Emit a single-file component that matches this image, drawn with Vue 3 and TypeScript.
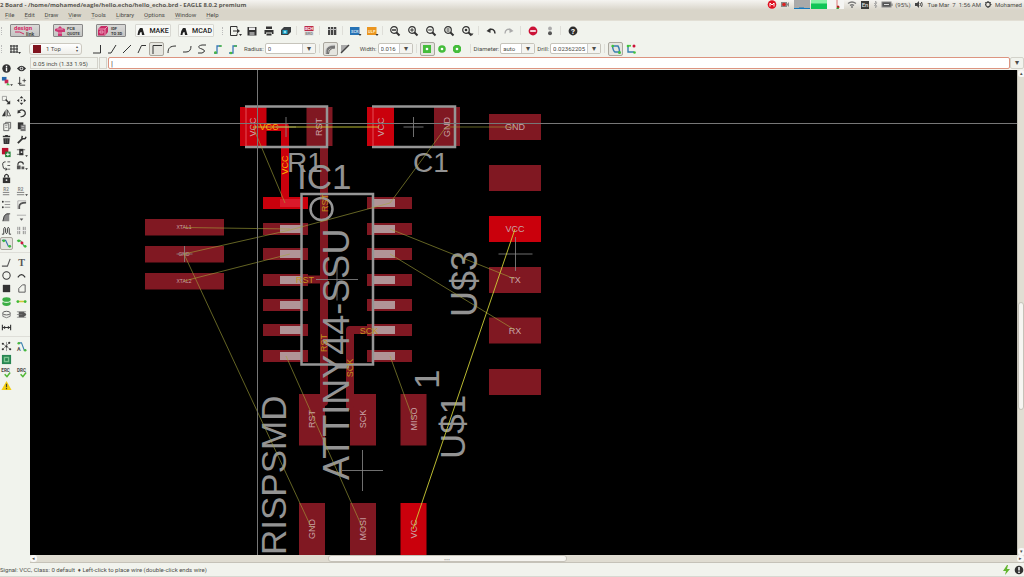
<script setup lang="ts">
import { ref } from 'vue'

interface Tool { id: string; label: string; wide?: boolean; on?: boolean }
interface Pad { x: number; y: number; w: number; h: number; hot?: boolean }
interface Label { t: string; x: number; y: number; up?: boolean; kind: string }

const D = '#333'
const line = (d: string, c = D, w = 1) => `<path d="${d}" fill="none" stroke="${c}" stroke-width="${w}"/>`
const fill = (d: string, c = D) => `<path d="${d}" fill="${c}"/>`
const disc = (x: number, y: number, r: number, c = D) => `<circle cx="${x}" cy="${y}" r="${r}" fill="${c}"/>`
const ring = (x: number, y: number, r: number, c = D, w = 1) => `<circle cx="${x}" cy="${y}" r="${r}" fill="none" stroke="${c}" stroke-width="${w}"/>`
const word = (t: string, x: number, y: number, s: number, c = '#fff') => `<text x="${x}" y="${y}" font-size="${s}" font-weight="700" text-anchor="middle" fill="${c}">${t}</text>`
const lens = ring(5, 5, 3.3, D, 1.2) + line('M7.5 7.5L10.5 10.5', D, 2)

const icons: Record<string, string> = {
  export: line('M8 3.500V1.500H1.500V10.500H8V8.500') + line('M4 6H9') + fill('M8 3.500L11 6L8 8.500Z') + fill('M10 9H13L11.500 11Z'),
  save: fill('M1.500 2H10.500V10.500H1.500Z') + fill('M3 2.500H9V5H3Z', '#eee') + fill('M3.500 7H8.500V10.500H3.500Z', '#999'),
  print: fill('M3 1.500H9V4H3ZM1.500 5H10.500V9H9V7.500H3V9H1.500ZM3.500 8.500H8.500V10.500H3.500Z'),
  boards: fill('M4 2H11V7L8 10H1V5Z', '#3a3f42') + fill('M2.500 5H7.500V9H2.500Z', '#1a9fc4') + disc(5, 7, 1.3, '#9de'),
  schematic: fill('M1.500 1H10.500V6H1.500Z', '#bd2946') + fill('M1.500 6H10.500V10.500H1.500Z', '#ddd') + word('SCH', 6, 5.2, 4) + word('BRD', 6, 10, 4, '#888'),
  library: fill('M2 2H4.300V10H2ZM5 2H7.300V10H5ZM8 2H10.300V10H8Z', '#444') + line('M2 4.500H11', '#bbb'),
  scr: fill('M1 2H10.500V10H1Z', '#2773b5') + word('SCR', 5.8, 7.6, 4, '#cde') + fill('M9.500 9H12.500L11 11Z'),
  ulp: fill('M1 2H10.500V10H1Z', '#ea951f') + word('ULP', 5.8, 7.6, 4, '#fec') + fill('M9.500 9H12.500L11 11Z'),
  zoomfit: lens + line('M3 5H7', D, 1.5),
  zoomin: lens + line('M3.200 5H6.800M5 3.200V6.800'),
  zoomout: lens + line('M3.200 5H6.800'),
  zoomredraw: lens + line('M3.500 4H6.500M3.500 6H6.500'),
  zoomselect: lens + disc(5, 5, 1.3) + fill('M9.500 8.500H12.500L11 10.500Z'),
  undo: line('M3.500 5.500C7 3 10 4.500 10 8.500', D, 1.5) + fill('M1.500 6L5.500 3V8Z'),
  redo: line('M8.500 5.500C5 3 2 4.500 2 8.500', '#aaa', 1.3) + fill('M10.500 6L6.500 3V8Z', '#aaa'),
  stop: disc(6, 6, 4.4, '#cb1237') + line('M3.200 6H8.800', '#fff', 1.6),
  go: disc(6, 3.5, 1.9, '#aaa') + disc(6, 8.2, 2, '#555'),
  help: disc(6, 6, 4.4, '#2d2d2d') + word('?', 6, 8.8, 8),
  grid: line('M2 3H10M2 6H10M2 9H10M3 2V10M6 2V10M9 2V10', D, 1) + fill('M10 9H13L11.500 11Z'),
  bend0: line('M2 10H9.500V2'), bend1: line('M2 10H5L10 2'), bend2: line('M2 10L10 2'), bend3: line('M2 10L5.500 2.500H10'),
  bend4: line('M2 11V2.500H11'), bend5: line('M2 10C2 5 4 3 10 3'), bend6: line('M2 9H5Q10 9 10 3'), bend7: line('M10 2H6C1 3 2 5 6 6Q11 8 6 10H2'),
  bend8: line('M3 10H6V3H10', '#3a78b8', 1.3) + disc(4.5, 9.7, 1.4, '#49b93f') + line('M8 3H11', '#49b93f', 1.3),
  bend9: line('M3 10H7V3H11', '#3a78b8', 1.3) + disc(5, 10, 1.3, '#49b93f') + line('M8 3H11', '#49b93f', 1.3),
  miter0: line('M3 11V8Q4 3.500 11 3.500', '#777', 2.5) + line('M2 10.500V6Q4 2 11 2', '#ccc', .8) + line('M4.500 11Q5 5 11 5', '#444', .8),
  miter1: fill('M2 2H10L2 10Z', '#aaa') + line('M2 10L10 2', '#444', 1.5),
  sq: fill('M2 2H10V10H2Z', '#45bd3c') + disc(6, 6, 1.3, '#fff'),
  rd: disc(6, 6, 3.8, '#45bd3c') + disc(6, 6, 1.3, '#fff'),
  oct: fill('M4 2H8L10 4V8L8 10H4L2 8V4Z', '#45bd3c') + disc(6, 6, 1.3, '#fff'),
  loop1: line('M2.500 3H8Q9.500 5 9.500 9H5Q3 8 2.500 3', '#397fb0', 1.5) + disc(2.7, 3, 1.3, '#3fc33b') + disc(9.5, 9.5, 1.5, '#3fc33b'),
  loop2: line('M3 3V9H9', '#397fb0', 1.4) + disc(3, 3, 1.3, '#3fc33b') + disc(9.5, 9.5, 1.3, '#3fc33b') + disc(9, 3, 1.5, '#cb1237') + disc(5, 2.7, 1, '#3fc33b'),
  info: disc(6, 6, 4.6) + line('M6 5V9M6 3V4.300', '#fff', 1.5),
  eye: fill('M1 6Q6 0 11 6Q6 12 1 6Z') + disc(6, 6, 2, '#eee') + disc(6, 6, 1.1),
  layers: fill('M1 1H6V5H1Z', '#2468ae') + fill('M4 4H8V8H4Z', '#c62453') + fill('M7 7L10 10H6Z', '#49bd56') + fill('M10 9H13L11.500 11Z'),
  mark: line('M4 1V10H10M2 8H6') + line('M7 5H11M9 3V7', D, .8),
  show: line('M1.500 1.500H6V6H1.500Z', '#888', .8) + line('M5 5L9 9', D, 1.5) + fill('M10 6V10H6Z'),
  move: fill('M6 1L8 3.500H4ZM6 11L8 8.500H4ZM1 6L3.500 4V8ZM11 6L8.500 4V8Z') + disc(6, 6, .7),
  mirror: fill('M5 2V9H1Z') + line('M6 1V10', '#777', .6) + line('M7 2V8.500H10.500Z', D, .8),
  rotate: line('M3 4C6 0 11 3 10 7Q8 10 5 9.500', D, 1.3) + fill('M1.500 6L5.500 5L2 2Z'),
  group: line('M3 3H8.500V10.500H3ZM5 3V1.500H10.500V8H9', '#555', .9) + line('M4.500 5H7M4.500 7H7', '#777', .7),
  paste: fill('M2 1.500H8V9H2Z') + fill('M5 4H10.500V11H5Z', '#777') + line('M6 6H9M6 8H9', '#ddd', .7),
  trash: fill('M2 2H10V3.500H2ZM4.500 1H7.500V2H4.500ZM2.500 4.500H9.500L9 11H3Z') + line('M5 5V10M7 5V10', '#777', .6),
  wrench: line('M2 10L7 5', D, 2) + line('M7 2Q5 6 10 5L11 3', D, 1.6),
  add: fill('M1 1H8V8H1Z', '#b9102e') + fill('M4.500 5H10.500V11H4.500Z', '#238239') + line('M5.500 8H9.500M7.500 6V10', '#fff', 1),
  pinswap: line('M1 3H10M1 8H8', '#666', 1) + fill('M3.500 2H8V9H3.500Z') + disc(6, 5.5, 1, '#eee') + fill('M10 9H13L11.500 11Z'),
  replace: line('M5 2Q1 2 2 6Q2 10 5 10', D, 1) + line('M7 2H10M7 6H10M7 10H10', '#555', 1) + fill('M5 8L7 10L5 12Z'),
  gateswap: line('M2 6Q2 2 5 2Q8 2 8 5', D, 1.2) + fill('M1 6H5V10H1ZM6 7H9V10H6Z', '#555') + fill('M10 9H13L11.500 11Z'),
  lock: fill('M2 5H10V11H2Z') + line('M4 5V3Q6 0 8 3V5', D, 1.4) + disc(6, 7.7, 1, '#eee'),
  name: word('R2', 5.5, 5, 5, '#888') + line('M2 7H9M2 9.500H9', '#777', 1),
  smash: word('R2', 5, 5, 5, '#888') + line('M1 7H9M1 9.500H9', '#777', 1) + fill('M10 9H13L11.500 11Z'),
  miter: disc(2, 3, 1) + disc(2, 9, 1) + line('M4 3H10M4 6H10M4 9H10', '#999', 1.3),
  corner: line('M3.500 11V8Q4 4 11 4', '#555', 2) + line('M2 11V2H11', '#aaa', 1),
  split: fill('M2 10Q3 3 6 2H9V10Z', '#888') + line('M2 10Q3 3 6 2H10', '#333', 1),
  optimize: line('M1 3.500H11', '#999', .8) + fill('M4 7H8L6 9.500Z', '#555'),
  meander: line('M1 10H3V4Q4 1 5 4V8Q6 11 7 8V4Q8 1 9 4V10H11', '#333', 1),
  ripup: line('M2 2V10M4 2V10M8 2V10M10 2V10', '#888', 1) + line('M1 6H11', '#eee', 1),
  route: line('M1 2.500H5L8 9H11', '#3975ad', 1.3) + disc(3, 3, 1.5, '#3cba3a') + disc(9.5, 9, 1.5, '#3cba3a'),
  unroute: line('M1 3H5L9 9', '#47a45c', 1.3) + disc(3, 3, 1.5, '#3cba3a') + disc(6.5, 5.5, 1.6, '#d01640') + disc(10, 9, 1.5, '#3cba3a'),
  wire: line('M1 10H7L10 2', '#555', 1.2), text: `<text x="6" y="10" font-size="11" font-family="Liberation Serif" font-weight="700" text-anchor="middle" fill="#555">T</text>`,
  circle: ring(6, 6, 4, D, 1.1), arc: line('M2 8Q6 2 10 8', D, 1.3), rect: fill('M2 2H10V10H2Z'),
  polygon: line('M3 10V6L7 2H10V10Z', '#555', 1),
  via: '<ellipse cx="6" cy="8" rx="4.500" ry="3" fill="#3cae45"/><ellipse cx="6" cy="5" rx="4.500" ry="2.500" fill="#d7f2d6"/><ellipse cx="6" cy="3.800" rx="4.500" ry="2.500" fill="#3cae45"/>',
  signal: line('M1 6H11', '#d0c835', 1.7) + disc(2, 6, 1.5, '#3cba3a') + disc(10, 6, 1.5, '#3cba3a'),
  hole: `<ellipse cx="6" cy="4.500" rx="4.200" ry="2" fill="none" stroke="#555"/><path d="M2 5V8Q6 11 10 8V5" fill="none" stroke="#777"/>`,
  attribute: fill('M3 3H9V9H3Z', '#555') + line('M1 3H11M1 6H11M1 9H11', '#777', .8) + disc(9, 6, 2, '#555'),
  dimension: line('M1.500 3V9M10.500 3V9M2 6H10', D, 1.2) + fill('M2 6L4.500 4V8ZM10 6L7.500 4V8Z'),
  ratsnest: line('M2 3L10 9M2 9L9 2M6 1V11', '#777', .8) + disc(2, 3, 1.2) + disc(10, 9, 1.2) + disc(2, 9, 1.2) + disc(9, 2, 1.2) + disc(6, 6, 1.2),
  auto: line('M3 2H6L9 10H11', '#397fb0', 1.2) + disc(3, 2.5, 1.4, '#49b93f') + disc(10, 10, 1.4, '#49b93f') + word('A', 3, 10.5, 6, '#555'),
  pcb: fill('M1 1H11V11H1Z', '#278652') + fill('M3 3H9V9H3Z', '#7bc48f') + fill('M4.500 4.500H7.500V7.500H4.500Z', '#278652'),
  erc: word('ERC', 5, 5, 5, '#444') + line('M4 8L6.500 10.500L10 6', '#50b735', 1.6),
  drc: word('DRC', 6, 5, 5, '#444') + line('M5 8L7.500 10.500L11 6', '#50b735', 1.6),
  warn: fill('M6 1L11.500 11H.5Z', '#f5cf10') + line('M6 4V7.500M6 8.500V10', '#443', 1.3),
}

const files: Tool[][] = [
  [{ id: 'export', label: 'Export' }, { id: 'save', label: 'Save' }, { id: 'print', label: 'Print' }, { id: 'boards', label: 'CAM' }],
  [{ id: 'schematic', label: 'Schematic' }],
  [{ id: 'library', label: 'Libraries' }],
  [{ id: 'scr', label: 'Script' }, { id: 'ulp', label: 'Run ULP' }],
  [{ id: 'zoomfit', label: 'Fit', wide: true }, { id: 'zoomin', label: 'Zoom in', wide: true }, { id: 'zoomout', label: 'Zoom out', wide: true }, { id: 'zoomredraw', label: 'Redraw', wide: true }, { id: 'zoomselect', label: 'Zoom select', wide: true }],
  [{ id: 'undo', label: 'Undo', wide: true }, { id: 'redo', label: 'Redo', wide: true }],
  [{ id: 'stop', label: 'Cancel' }, { id: 'go', label: 'Go' }],
  [{ id: 'help', label: 'Help', wide: true }],
]
const bends = Array.from({ length: 10 }, (_, i) => ({ id: 'bend' + i, label: 'Wire bend ' + i, on: i === 4 }))
const shapes = ['sq', 'rd', 'oct']
const palette: string[][][] = [
  [['info', 'eye'], ['layers', 'mark']],
  [['show', 'move'], ['mirror', 'rotate'], ['group', 'paste'], ['trash', 'wrench'], ['add', 'pinswap'], ['replace', 'gateswap'], ['lock'], ['name', 'smash'], ['miter', 'corner'], ['split', 'optimize'], ['meander', 'ripup'], ['route', 'unroute']],
  [['wire', 'text'], ['circle', 'arc'], ['rect', 'polygon'], ['via', 'signal'], ['hole', 'attribute'], ['dimension']],
  [['ratsnest', 'auto'], ['pcb'], ['erc', 'drc'], ['warn']],
]
const menus = ['File', 'Edit', 'Draw', 'View', 'Tools', 'Library', 'Options', 'Window', 'Help']
const command = ref('')

const rows = [197, 223, 248, 274, 299, 324, 350]
const pads: Pad[] = [
  ...[219, 246, 273].map(y => ({ x: 145, y, w: 79, h: 16.5 })),
  ...[114, 165, 216, 267, 317.500, 369].map((y, i) => ({ x: 489, y, w: 52, h: 26, hot: i === 2 })),
  { x: 240, y: 107, w: 26.5, h: 39, hot: true }, { x: 306.5, y: 107, w: 26, h: 39 },
  { x: 367, y: 107, w: 27, h: 39, hot: true }, { x: 434, y: 107, w: 26, h: 39 },
  ...rows.map((y, i) => ({ x: 263, y, w: 45, h: 12, hot: i === 0 })),
  ...rows.map(y => ({ x: 367, y, w: 45, h: 12 })),
  ...[299, 350, 400.5].map(x => ({ x, y: 394, w: 26, h: 51.5 })),
  ...[299, 350, 400.5].map((x, i) => ({ x, y: 503, w: 26, h: 53, hot: i === 2 })),
]
const labels: Label[] = [
  { t: 'R1', x: 287, y: 172, kind: 'mid' }, { t: 'C1', x: 413, y: 172, kind: 'mid' }, { t: 'IC1', x: 297, y: 189, kind: 'big' },
  { t: 'ATTINY44-SSU', x: 349, y: 480, up: true, kind: 'huge' }, { t: 'RISPSMD', x: 286, y: 555, up: true, kind: 'big' },
  { t: 'U$3', x: 477, y: 317, up: true, kind: 'huge' }, { t: 'U$1', x: 465, y: 459, up: true, kind: 'big' }, { t: '1', x: 439, y: 389, up: true, kind: 'big' },
  { t: 'VCC', x: 256, y: 127, up: true, kind: 'pin' }, { t: 'RST', x: 322, y: 127, up: true, kind: 'pin' },
  { t: 'VCC', x: 384, y: 127, up: true, kind: 'pin' }, { t: 'GND', x: 450, y: 127, up: true, kind: 'pin' },
  { t: 'GND', x: 515, y: 130, kind: 'pin' }, { t: 'VCC', x: 515, y: 232, kind: 'pin' }, { t: 'TX', x: 515, y: 283, kind: 'pin' }, { t: 'RX', x: 515, y: 334, kind: 'pin' },
  { t: 'XTAL1', x: 184, y: 229, kind: 'tiny' }, { t: 'GND', x: 184, y: 256, kind: 'tiny' }, { t: 'XTAL2', x: 184, y: 283, kind: 'tiny' },
  { t: 'RST', x: 315, y: 419, up: true, kind: 'pin' }, { t: 'SCK', x: 366, y: 419, up: true, kind: 'pin' }, { t: 'MISO', x: 417, y: 419, up: true, kind: 'pin' },
  { t: 'GND', x: 315, y: 529, up: true, kind: 'pin' }, { t: 'MOSI', x: 366, y: 529, up: true, kind: 'pin' }, { t: 'VCC', x: 417, y: 529, up: true, kind: 'pin' },
  { t: 'VCC', x: 269, y: 130, kind: 'netHot' }, { t: 'VCC', x: 288, y: 165, up: true, kind: 'netHot' },
  { t: 'RST', x: 305, y: 283, kind: 'net' }, { t: 'SCK', x: 369, y: 334, kind: 'net' },
  { t: 'RST', x: 328, y: 203, up: true, kind: 'net' }, { t: 'RST', x: 327, y: 343, up: true, kind: 'net' }, { t: 'SCK', x: 353, y: 368, up: true, kind: 'net' },
]
const airwires = [
  'M253 127L285 203', 'M184 227.500L290 229', 'M184 254L290 230L390 203', 'M184 281L290 254', 'M184 254L312 529', 'M286 356L363 529',
  'M390 356L413 419', 'M390 229L515 279', 'M390 254L515 330', 'M446 127L390 203', 'M446 127H515',
]
const crosses = [[286, 127, 10], [413.5, 127, 10], [515.5, 254, 17], [184.5, 254, 8], [337, 279.5, 21], [362.5, 470.5, 20.5]]
</script>

<template>
  <div class="app">
    <header class="title">
      <h1>2 Board - /home/mohamed/eagle/hello.echo/hello_echo.brd - EAGLE 8.0.2 premium</h1>
      <div class="tray">
        <svg class="sys" width="78" height="10" viewBox="0 0 78 10">
          <circle cx="5" cy="4.500" r="4.300" fill="#df1020" /><path d="M3 6.500V3L5 5L7 3V6.500" fill="none" stroke="#fff" />
          <path d="M14 2H20V7H14ZM20 4L22 2V7L20 5Z" fill="#888" /><circle cx="17" cy="4.500" r="1.800" fill="#d22" />
          <rect x="27" width="16" height="9" fill="#aaa" /><path d="M27 9V8H32V7.500H37V8H43V9Z" fill="#1479bd" />
          <rect x="44" width="16" height="9" fill="#10c557" /><rect x="44" width="16" height="3.500" fill="#88f2a8" />
          <rect x="60" width="17" height="9" fill="#f5f5f3" /><path d="M70 0V6" stroke="#d77" /><circle cx="71" cy="7" r="1.500" fill="#b22" /><path d="M69 9L71 7L72 9Z" fill="#3a3" />
        </svg>
        <svg class="sys" width="44" height="10" viewBox="0 0 44 10">
          <path d="M0 3.500Q4 .5 8 3.500M2 5.500Q4 4 6 5.500" fill="none" stroke="#777" stroke-width="1.300" /><circle cx="4" cy="7" r="1" fill="#777" />
          <rect x="13" y="1" width="8" height="8" fill="#3b3b39" /><text x="17" y="7" text-anchor="middle" fill="#eee">En</text>
          <path d="M26 3L29 6L27.500 8V1L29 3L26 6" fill="none" stroke="#999" stroke-width=".7" />
          <rect x="34" y="2" width="9" height="5" fill="#555" stroke="#888" /><path d="M36 4.500H41" stroke="#ddd" /><path d="M44 3.500V6" stroke="#777" />
        </svg>
        <span>(95%)</span>
        <svg class="sys" width="11" height="10" viewBox="0 0 11 10"><path d="M1 3H3L5 1V8L3 6H1Z" fill="#444" /><path d="M6 3Q7 4.500 6 6M7.500 2Q9 4.500 7.500 7" fill="none" stroke="#444" /></svg>
        <span>Tue Mar&nbsp; 7&nbsp; 1:56 AM</span>
        <svg class="sys" width="8" height="10" viewBox="0 0 8 10"><circle cx="4" cy="4.500" r="2.300" fill="none" stroke="#444" stroke-width="1.200" /><path d="M4 1V3M1 4.500H2M6 4.500H7.500M4 7V8M1.500 2L2 3M6.500 2L6 3" stroke="#444" /></svg>
        <span>Mohamed</span>
      </div>
    </header>
    <nav class="menu"><button v-for="m in menus" :key="m"><u>{{ m[0] }}</u>{{ m.slice(1) }}</button></nav>

    <div class="bar first">
      <i class="handle" />
      <button class="brand" aria-label="Design link">
        <svg width="28" height="12" viewBox="0 0 28 12"><text x="3" y="5" font-size="6" fill="#d32b65" font-weight="700">design</text><text x="15" y="11" font-size="5" fill="#444" font-weight="700">link</text><path d="M4 7Q9 6 13 9" fill="none" stroke="#d32b65" /></svg>
      </button>
      <button class="brand" aria-label="PCB quote">
        <svg width="28" height="12" viewBox="0 0 28 12"><path d="M1 4L4 3L6 1L8 3L11 4V7L8 7V11H4V7L1 6Z" fill="#cb3a75" /><path d="M3 4H9M4 8H8" stroke="#e699b8" /><text x="13" y="5" font-size="4" fill="#444" font-weight="700">PCB</text><text x="13" y="10" font-size="4" fill="#444" font-weight="700">QUOTE</text></svg>
      </button>
      <button class="brand" aria-label="IDF to 3D">
        <svg width="28" height="12" viewBox="0 0 28 12"><path d="M1 4L4 1H11V7L8 10.500H1Z" fill="#c62b64" /><path d="M1 4H8V10M8 4L11 1M3 6H6V8H3Z" fill="none" stroke="#f3b4cb" stroke-width=".8" /><text x="14" y="5" font-size="4" fill="#333" font-weight="700">IDF</text><text x="14" y="10" font-size="4" fill="#333" font-weight="700">TO 3D</text></svg>
      </button>
      <button v-for="n in ['MAKE', 'MCAD']" :key="n" class="flat">
        <svg width="8" height="8" viewBox="0 0 8 8"><path d="M.5 8Q.5 4 3 1H5.500L7.500 8H5L4.500 5Q2.500 5 2.500 8Z" fill="#222" /></svg>{{ n }}
      </button>
      <i class="handle" />
      <div v-for="(g, i) in files" :key="i" class="group">
        <button v-for="t in g" :key="t.id" class="tool" :class="{ wide: t.wide }" :aria-label="t.label"><svg class="icon" viewBox="0 0 12 12" v-html="icons[t.id]" /></button>
      </div>
    </div>

    <div class="bar second">
      <i class="handle" />
      <button class="tool" aria-label="Grid"><svg class="icon" viewBox="0 0 12 12" v-html="icons.grid" /></button>
      <label class="layer"><span class="swatch" /><select aria-label="Layer"><option>1 Top</option></select><span class="spin">▴<br>▾</span></label>
      <div class="set bends"><button v-for="b in bends" :key="b.id" class="tool" :class="{ on: b.on }" :aria-label="b.label"><svg class="icon" viewBox="0 0 12 12" v-html="icons[b.id]" /></button></div>
      <label class="field">Radius:<span class="combo long"><select><option>0</option></select></span></label>
      <div class="set ruled"><button class="tool on" aria-label="Round miter"><svg class="icon" viewBox="0 0 12 12" v-html="icons.miter0" /></button><button class="tool" aria-label="Straight miter"><svg class="icon" viewBox="0 0 12 12" v-html="icons.miter1" /></button></div>
      <label class="field">Width:<span class="combo"><select><option>0.016</option></select></span></label>
      <div class="set ruled"><button v-for="(s, i) in shapes" :key="s" class="tool" :class="{ on: i === 0 }" :aria-label="'Via ' + s"><svg class="icon" viewBox="0 0 12 12" v-html="icons[s]" /></button></div>
      <label class="field ruled">Diameter:<span class="combo"><select><option>auto</option></select></span></label>
      <label class="field drill">Drill:<span class="combo long"><select><option>0.02362205</option></select></span></label>
      <div class="set ruled"><button class="tool on" aria-label="Remove loops"><svg class="icon" viewBox="0 0 12 12" v-html="icons.loop1" /></button><button class="tool" aria-label="Keep loops"><svg class="icon" viewBox="0 0 12 12" v-html="icons.loop2" /></button></div>
    </div>

    <div class="work">
      <aside class="palette">
        <div v-for="(g, i) in palette" :key="i" class="pgroup">
          <div v-for="r in g" :key="r[0]" class="prow">
            <button v-for="id in r" :key="id" class="ptool" :class="{ on: id === 'route' }" :aria-label="id"><svg class="icon" viewBox="0 0 12 12" v-html="icons[id]" /></button>
          </div>
        </div>
      </aside>
      <main class="editor">
        <div class="command">
          <output class="coords">0.05 inch (1.33 1.95)</output><span class="gap" />
          <input v-model="command" aria-label="Command line" placeholder="|"><button class="history" aria-label="Command history">▾</button>
        </div>
        <div class="canvas-row">
          <svg class="board">
            <g transform="translate(-30 -70)">
              <rect v-for="(p, i) in pads" :key="'p' + i" :x="p.x" :y="p.y" :width="p.w" :height="p.h" :class="p.hot ? 'hot' : 'copper'" />
              <path class="trace" d="M324 146V402M308 279.500H324M390 330H350V406" />
              <g v-for="(y, i) in rows" :key="'y' + y">
                <rect x="280" :y="y + 2" width="22" height="8" :class="i ? 'leg' : 'hotleg'" /><rect x="373" :y="y + 2" width="22" height="8" class="leg" />
              </g>
              <path class="trace live" d="M253 127H285V203" /><rect x="280" y="199" width="21" height="8" class="hotleg" />
              <path class="outline" d="M245 106.500H327V147H245M372 106.500H455V147H372M301.500 194H373V364.500H301.500Z" />
              <path class="faint" d="M246 108V146M373 108V146" />
              <circle class="outline" cx="321.500" cy="209" r="11" />
              <text v-for="(l, i) in labels" :key="'l' + i" :x="l.x" :y="l.y" :class="l.kind" :transform="l.up ? `rotate(-90 ${l.x} ${l.y})` : undefined">{{ l.t }}</text>
              <path v-for="(c, i) in crosses" :key="'c' + i" class="cross" :d="`M${c[0] - c[2]} ${c[1]}H${c[0] + c[2]}M${c[0]} ${c[1] - c[2]}V${c[1] + c[2]}`" />
              <path v-for="a in airwires" :key="a" class="air" :d="a" />
              <path class="air bright" d="M515 229L413 529M253 127H379" />
              <path class="cursor" d="M257.500 0V3000M0 123.500H4000" />
            </g>
          </svg>
          <div class="vscroll"><i>▴</i><b /><i>▾</i></div>
        </div>
        <div class="hscroll"><i>◂</i><b>⋯</b><i>▸</i></div>
      </main>
    </div>
    <footer class="status">
      <span>Signal: VCC, Class: 0 default &nbsp;♦ Left-click to place wire (double-click ends wire)</span>
      <svg width="22" height="12" viewBox="0 0 22 12"><path d="M5 1L1 7H4L3 11L8 5H5L6 1Z" fill="#62b52f" /><circle cx="17" cy="6" r="4.300" fill="#333" /><path d="M17 3V6.500M17 7.500V9" stroke="#fff" stroke-width="1.500" /></svg>
    </footer>
  </div>
</template>

<style>
html, body, #app { height: 100%; margin: 0; }
body { overflow: hidden; }
</style>
<style scoped>
* { box-sizing: border-box; }
.app { display: flex; flex-direction: column; height: 100%; background: #f1f3ed; color: #4c4c48; font: 6px/8px Roboto, "Noto Sans", sans-serif; }
button, select, input { font: inherit; color: inherit; padding: 0; margin: 0; border: 0; background: none; }
.title { display: flex; justify-content: space-between; height: 10px; flex: none; background: linear-gradient(#f5f4f1, #d9d5ca); }
h1 { margin: 0; font: 700 6px/10px "Open Sans", "Noto Sans", sans-serif; color: #5a5852; white-space: nowrap; }
.tray { display: flex; align-items: center; gap: 3px; padding-right: 2px; white-space: nowrap; }
.sys { flex: none; overflow: visible; }
.menu { display: flex; gap: 10px; flex: none; height: 11px; padding: 1px 5px; background: #d9d5c9; border-bottom: 1px solid #e2dfd5; }
.menu u { text-decoration-thickness: 1px; text-decoration-color: #8885; }
.bar { display: flex; align-items: center; flex: none; }
.first { height: 19px; }
.second { height: 17px; }
.handle { width: 2px; height: 8px; margin: 0 2px 0 1px; border-left: 1px dotted #bbb; flex: none; }
.brand { width: 30px; height: 13px; margin-right: 13px; border: 1px solid #888; border-radius: 1px; background: linear-gradient(#d9d9d7, #c5c5c3); display: flex; align-items: center; overflow: hidden; }
.first > .handle:first-child { margin-right: 7px; }
.brand + .flat { margin-left: -4px; }
.flat { display: flex; align-items: center; justify-content: center; gap: 4px; width: 36px; height: 13px; margin-right: 7px; border: 1px solid #d8d8d2; border-radius: 1px; background: #f8f9f6; color: #222; font-size: 7px; font-weight: 500; }
.group { display: flex; }
.group + .group { padding-left: 5px; margin-left: 1px; background: linear-gradient(#deded8, #deded8) 1px 3px / 1px 9px no-repeat; }
.tool { display: grid; place-items: center; width: 17px; height: 15px; flex: none; }
.wide { width: 18px; }
.icon { width: 12px; height: 12px; overflow: visible; display: block; }
.tool.on, .ptool.on { border: 1px solid #aaa79e; border-radius: 2px; background: #e5e5df; }
.set { display: flex; }
.set .tool { width: 15px; height: 14px; }
.layer { position: relative; display: flex; align-items: center; width: 53px; height: 12px; margin-left: 7px; padding-left: 3px; gap: 5px; border: 1px solid #ccc9c0; border-radius: 3px; background: linear-gradient(#fff, #eeeee9); }
.swatch { width: 8px; height: 8px; flex: none; background: #80131e; }
.spin { position: absolute; right: 3px; top: 1px; font-size: 4px; line-height: 4px; }
select { appearance: none; width: 100%; height: 100%; }
.bends { margin-left: 7px; }
.field { display: flex; align-items: center; gap: 1px; margin-left: 5px; }
.drill { margin-left: 2px; }
.combo { position: relative; display: block; width: 35px; height: 11px; padding-left: 2px; border: 1px solid #c6c4bb; border-radius: 2px; background: #fff; }
.long { width: 51px; }
.combo::after { content: "▾"; position: absolute; right: 0; top: 0; bottom: 0; width: 12px; border-left: 1px solid #ccc; background: #f4f4f0; text-align: center; font-size: 8px; line-height: 9px; pointer-events: none; }
.ruled { margin-left: 3px; padding-left: 4px; background: linear-gradient(#deded8, #deded8) 0 50% / 1px 9px no-repeat; }
.set.ruled { padding-right: 2px; }
.work { flex: 1; min-height: 0; display: flex; }
.palette { flex: none; width: 30px; padding-top: 5px; }
.pgroup + .pgroup { margin-top: 2px; padding-top: 3px; border-top: 1px solid #deded8; }
.prow { display: flex; gap: 2px; height: 13px; }
.ptool { width: 13px; height: 13px; display: grid; place-items: center; }
.ptool .icon { width: 11px; height: 11px; }
.editor { flex: 1; min-width: 0; display: flex; flex-direction: column; }
.command { display: flex; height: 13px; flex: none; padding-bottom: 1px; }
.coords { width: 68px; padding: 2px; border: 1px solid #d3d2ca; white-space: nowrap; }
.gap { width: 8px; margin: 0 1px; border: 1px solid #d3d2ca; }
.command input { flex: 1; min-width: 0; padding-left: 2px; border: 1px solid #dc9480; border-radius: 2px; background: #fff; font-size: 8px; }
.command input::placeholder { color: #444; }
.history { width: 14px; border: 1px solid #d3d2ca; border-radius: 2px; font-size: 8px; }
.canvas-row { flex: 1; min-height: 0; display: flex; }
.board { flex: 1; min-width: 0; height: 100%; background: #000; overflow: hidden; }
.vscroll { width: 7px; display: flex; flex-direction: column; justify-content: space-between; background: #e1ded3; border-left: 1px solid #c5c2b8; }
.vscroll b { height: 108px; margin-top: 86px; border: 1px solid #c5c2b8; border-radius: 3px; background: #f6f5f1; }
.vscroll i, .hscroll i { width: 7px; height: 7px; border-radius: 3px; background: #f8f8f6; font: 5px/7px sans-serif; text-align: center; }
.hscroll { display: flex; justify-content: space-between; height: 8px; flex: none; background: #dfdcd1; border-bottom: 1px solid #c5c2b8; }
.hscroll b { width: 24%; margin-right: 16%; border: 1px solid #c5c2b8; border-radius: 3px; background: #f4f3ee; text-align: center; line-height: 5px; color: #999; }
.status { display: flex; flex: none; align-items: center; justify-content: space-between; height: 14px; border-bottom: 1px solid #d8d8d1; white-space: nowrap; }
.copper { fill: #801822; }
.hot { fill: #ca000c; }
.leg { fill: #b19497; }
.hotleg { fill: #d9192a; }
.trace { fill: none; stroke: #801822; stroke-width: 8; stroke-linecap: round; stroke-linejoin: round; }
.live { stroke: #ca000c; }
.outline { fill: none; stroke: #969696; stroke-width: 2.5; }
.faint { stroke: #e0404a; stroke-width: 2; opacity: .6; }
.board text { font-family: "Liberation Sans", Arial, sans-serif; fill: #939393; }
.board .huge { font-size: 36px; }
.board .big { font-size: 35px; }
.board .mid { font-size: 28px; }
.board .pin, .board .tiny, .board .net, .board .netHot { text-anchor: middle; font-size: 9px; fill: #c9a3a6; }
.board .tiny { font-size: 5px; }
.board .net { fill: #c4941c; }
.board .netHot { fill: #ffb000; }
.cross { fill: none; stroke: #8b8b8b; stroke-width: 1; opacity: .8; }
.air { fill: none; stroke: #a5a53a; stroke-width: 1; opacity: .6; }
.bright { stroke: #cdcd35; opacity: .9; }
.cursor { fill: none; stroke: #777; stroke-width: 1; }
</style>
